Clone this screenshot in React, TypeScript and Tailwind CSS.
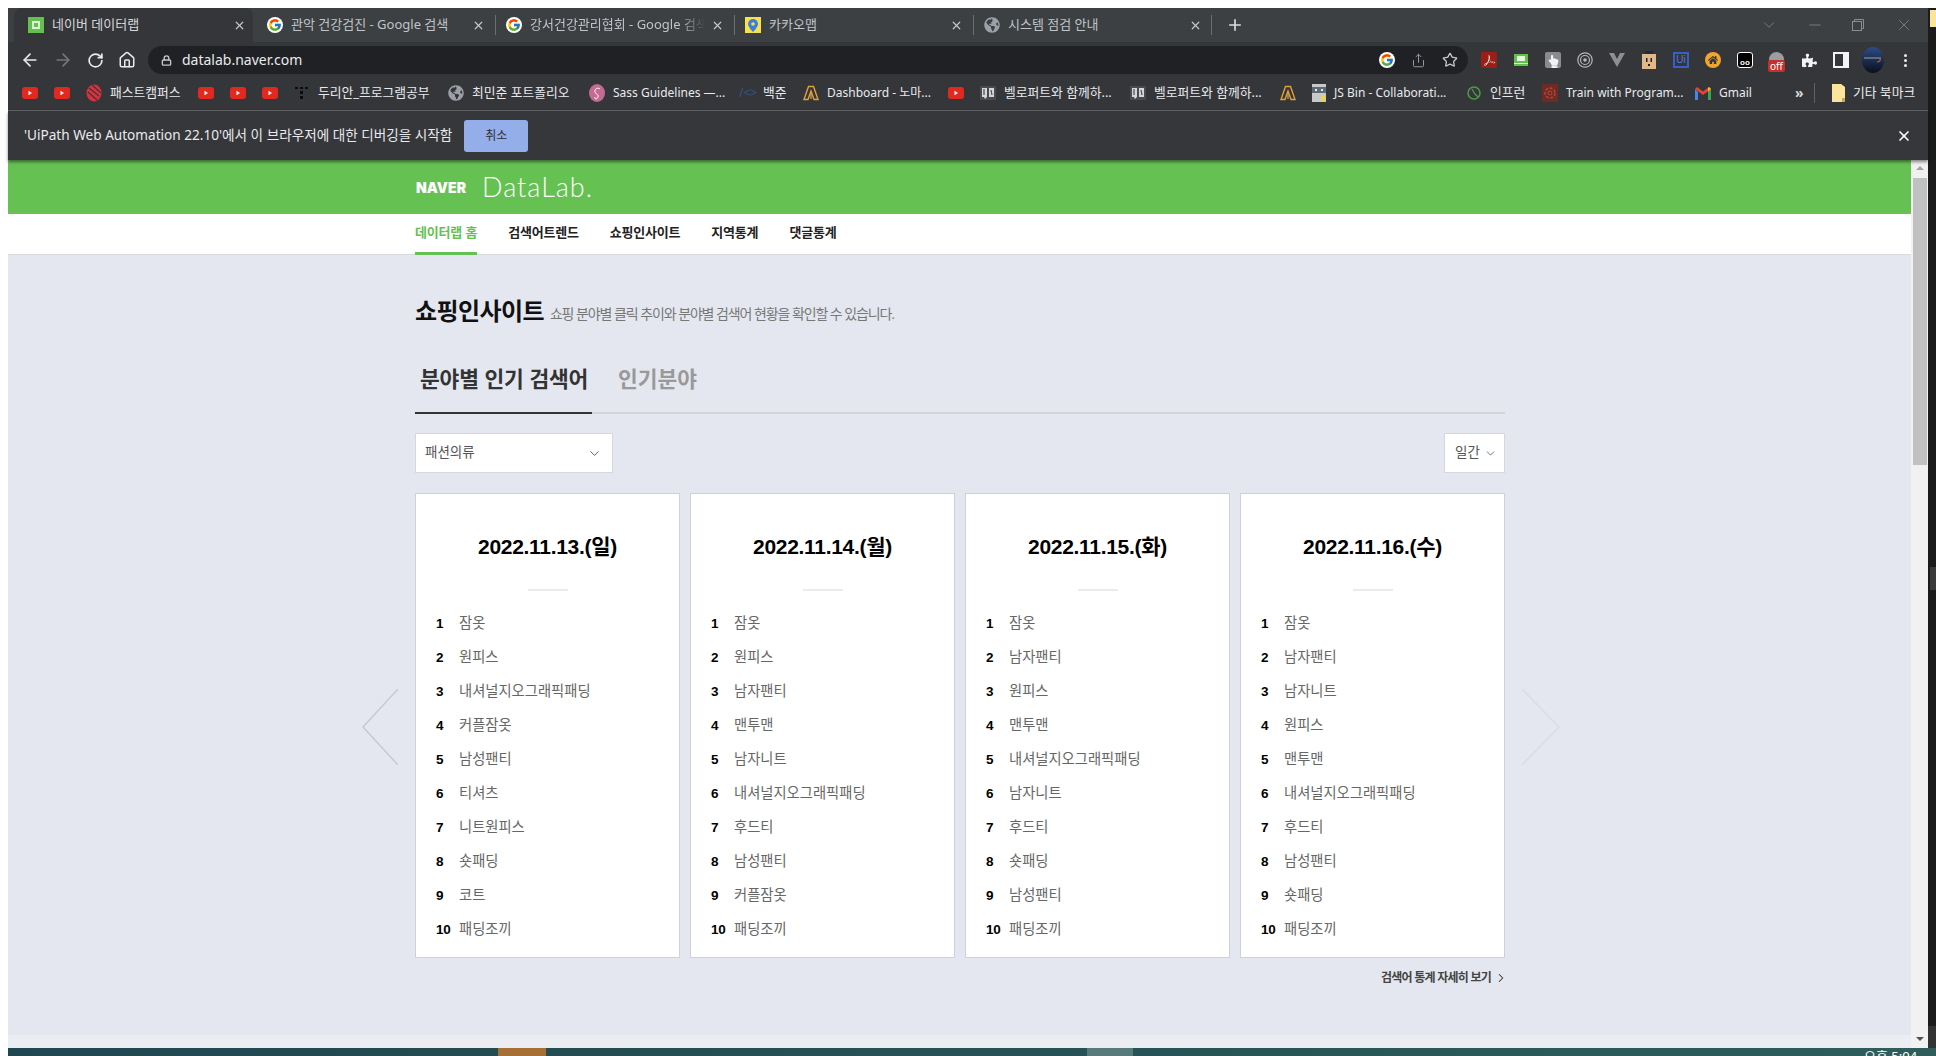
import { ArrowLeft, ArrowRight, RotateCw, Home, Lock, Star, Share, X, Plus, ChevronDown, ChevronRight, Minus } from "lucide-react";
import { FaGlobeAmericas, FaHandPointUp, FaHome, FaPuzzlePiece } from "react-icons/fa";
import { FcGoogle } from "react-icons/fc";
import { SiAdobeacrobatreader } from "react-icons/si";
import type { ReactNode } from "react";

const uiFont = "font-['Noto_Sans','Noto_Sans_CJK_KR',sans-serif]";
const pageFont = "font-['Liberation_Sans','Noto_Sans_CJK_KR',sans-serif]";

const YouTube = () => (
  <svg width="16" height="12" viewBox="0 0 16 12" className="shrink-0">
    <rect width="16" height="12" rx="3" fill="#e1291f" />
    <path d="M6.5 3.8v4.4L10 6z" fill="#fff" />
  </svg>
);

const Book = () => (
  <svg width="16" height="16" viewBox="0 0 16 16" className="shrink-0">
    <rect width="16" height="14" y="1" fill="#4a4b4e" />
    <path d="M2 3h5v9l-2 2-1-2H2zM9 3h5v9H9z" fill="#d5d6d8" />
    <path d="M4 4v6M11 5l1 5" stroke="#4a4b4e" strokeWidth="1.2" />
  </svg>
);

const Nomad = () => (
  <svg width="16" height="16" viewBox="0 0 16 16" className="shrink-0">
    <path d="M5.5 1.5h5l4.5 13h-4L8 6l-3 8.5H1z" fill="none" stroke="#e0a13c" strokeWidth="1.4" />
    <path d="M8 6v8" stroke="#e0a13c" strokeWidth="1.2" />
  </svg>
);

const Globe = ({ size = 16 }: { size?: number }) => <FaGlobeAmericas size={size} className="shrink-0 text-[#9aa0a6]" />;

const FastCampus = () => (
  <svg width="16" height="18" viewBox="0 0 16 18" className="shrink-0">
    <ellipse cx="8" cy="9" rx="7.5" ry="8.5" fill="#d9313d" />
    <path d="M3 4l10 8M2 8l9 8M6 1l9 8" stroke="#35363a" strokeWidth="1.1" />
  </svg>
);

const Dots = () => (
  <svg width="16" height="16" viewBox="0 0 16 16" className="shrink-0">
    <g fill="#0b0b0b">
      <rect x="1" y="2" width="3" height="2" />
      <rect x="6" y="2" width="3" height="2" />
      <rect x="11" y="2" width="3" height="2" />
      <rect x="6" y="6" width="3" height="3" />
      <rect x="6" y="11" width="3" height="3" />
    </g>
  </svg>
);

const Sass = () => (
  <svg width="16" height="18" viewBox="0 0 16 18" className="shrink-0">
    <ellipse cx="8" cy="9" rx="8" ry="9" fill="#c56a93" />
    <path d="M11 5c-2-2-6 0-5 3s4 2 3 5-4 2-3 0" fill="none" stroke="#fff" strokeWidth="1" />
  </svg>
);

const Baekjoon = () => <span className="w-[16px] shrink-0 text-[12px] leading-none text-[#33568a]">/&lt;&gt;</span>;

const JsBin = () => (
  <svg width="14" height="18" viewBox="0 0 14 18" className="shrink-0">
    <rect width="14" height="18" fill="#c7c9cc" />
    <rect y="3" width="14" height="6" fill="#5d6a75" />
    <rect x="3" y="5" width="2" height="2" fill="#e8eaed" />
    <rect x="9" y="5" width="2" height="2" fill="#e8eaed" />
    <rect x="9" y="12" width="4" height="5" fill="#ecd34d" />
  </svg>
);

const Inflearn = () => (
  <svg width="16" height="16" viewBox="0 0 16 16" className="shrink-0">
    <circle cx="8" cy="8" r="6" fill="none" stroke="#4e9a4a" strokeWidth="1.5" />
    <path d="M6 4l3 5 3 3" fill="none" stroke="#4e9a4a" strokeWidth="1.3" />
  </svg>
);

const TrainIcon = () => (
  <svg width="16" height="18" viewBox="0 0 16 18" className="shrink-0">
    <rect width="16" height="18" fill="#6f2a24" />
    <circle cx="8" cy="9" r="5" fill="none" stroke="#b4483c" strokeWidth="1.5" strokeDasharray="3 1.5" />
    <circle cx="8" cy="9" r="2" fill="none" stroke="#b4483c" />
  </svg>
);

const GmailIcon = () => (
  <svg width="16" height="13" viewBox="0 0 16 13" className="shrink-0">
    <path d="M0 2v11h3V5z" fill="#4285f4" />
    <path d="M16 2v11h-3V5z" fill="#34a853" />
    <path d="M0 2l8 6 8-6-2-2-6 4.5L2 0z" fill="#ea4335" />
    <path d="M13 5l3-3-2-2-1 .8z" fill="#fbbc04" />
  </svg>
);

const Folder = () => (
  <svg width="13" height="18" viewBox="0 0 13 18" className="shrink-0">
    <path d="M0 0h9l4 3v15H0z" fill="#fde49b" />
    <path d="M10 14h3v4h-3z" fill="#c9a94f" />
  </svg>
);

type Mark = { icon: ReactNode; label?: string; cls: string };

// cls sets how wide each bookmark is, so the next one lands where chrome put it
const BOOKMARKS: Mark[] = [
  { icon: <YouTube />, cls: "w-[32px]" },
  { icon: <YouTube />, cls: "w-[32px]" },
  { icon: <FastCampus />, label: "패스트캠퍼스", cls: "w-[112px]" },
  { icon: <YouTube />, cls: "w-[32px]" },
  { icon: <YouTube />, cls: "w-[32px]" },
  { icon: <YouTube />, cls: "w-[32px]" },
  { icon: <Dots />, label: "두리안_프로그램공부", cls: "w-[154px]" },
  { icon: <Globe />, label: "최민준 포트폴리오", cls: "w-[141px]" },
  { icon: <Sass />, label: "Sass Guidelines —...", cls: "w-[150px]" },
  { icon: <Baekjoon />, label: "백준", cls: "w-[64px]" },
  { icon: <Nomad />, label: "Dashboard - 노마...", cls: "w-[145px]" },
  { icon: <YouTube />, cls: "w-[32px]" },
  { icon: <Book />, label: "벨로퍼트와 함께하...", cls: "w-[150px]" },
  { icon: <Book />, label: "벨로퍼트와 함께하...", cls: "w-[150px]" },
  { icon: <Nomad />, cls: "w-[32px]" },
  { icon: <JsBin />, label: "JS Bin - Collaborati...", cls: "w-[154px]" },
  { icon: <Inflearn />, label: "인프런", cls: "w-[76px]" },
  { icon: <TrainIcon />, label: "Train with Program...", cls: "w-[153px]" },
  { icon: <GmailIcon />, label: "Gmail", cls: "w-[90px]" },
];

const NaverFav = () => (
  <span className="flex h-[16px] w-[16px] shrink-0 items-center justify-center bg-[#64c14f]">
    <span className="h-[8px] w-[8px] border-2 border-[#dff3d8]" />
  </span>
);

const GoogleFav = () => (
  <span className="flex h-[16px] w-[16px] shrink-0 items-center justify-center rounded-full bg-white">
    <FcGoogle size={14} />
  </span>
);

const KakaoFav = () => (
  <span className="flex h-[16px] w-[16px] shrink-0 items-center justify-center bg-[#f7e14d]">
    <svg width="10" height="13" viewBox="0 0 10 13">
      <path d="M5 0a5 5 0 0 0-5 5c0 3 5 8 5 8s5-5 5-8a5 5 0 0 0-5-5z" fill="#3c7ee0" />
      <circle cx="5" cy="5" r="1.8" fill="#f7e14d" />
    </svg>
  </span>
);

const TABS = [
  { fav: <NaverFav />, title: "네이버 데이터랩", active: true, sep: false, fade: false },
  { fav: <GoogleFav />, title: "관악 건강검진 - Google 검색", active: false, sep: false, fade: false },
  { fav: <GoogleFav />, title: "강서건강관리협회 - Google 검색", active: false, sep: true, fade: true },
  { fav: <KakaoFav />, title: "카카오맵", active: false, sep: true, fade: false },
  { fav: <Globe />, title: "시스템 점검 안내", active: false, sep: true, fade: false },
];

const Sidebar = () => (
  <svg width="16" height="16" viewBox="0 0 16 16">
    <rect width="16" height="16" fill="#f1f3f4" />
    <rect x="2" y="2" width="8" height="12" fill="#35363a" />
  </svg>
);

const EXTENSIONS: ReactNode[] = [
  <span className="flex h-[16px] w-[16px] items-center justify-center rounded-[2px] bg-[#9b1f16] text-white"><SiAdobeacrobatreader size={11} /></span>,
  <svg width="14" height="12" viewBox="0 0 14 12"><rect width="14" height="12" fill="#5fc14a" /><rect x="3" y="2" width="8" height="5" fill="#e8f6e2" /><rect y="9" width="14" height="1" fill="#e8f6e2" /></svg>,
  <span className="flex h-[16px] w-[16px] items-end justify-center rounded-[2px] bg-[#8a8b8d] text-[#f1f1f1]"><FaHandPointUp size={13} /></span>,
  <svg width="16" height="16" viewBox="0 0 16 16" fill="none" stroke="#b5b7ba"><circle cx="8" cy="8" r="7.2" strokeWidth="1.2" /><circle cx="8" cy="8" r="4.5" strokeWidth="1.2" /><circle cx="8" cy="8" r="1.8" fill="#b5b7ba" stroke="none" /></svg>,
  <svg width="16" height="14" viewBox="0 0 16 14"><path d="M0 0h5l3 6 3-6h5L8 14z" fill="#8d8f92" /></svg>,
  <svg width="14" height="18" viewBox="0 0 14 18"><rect y="3" width="14" height="15" fill="#e0b88a" /><rect x="3" y="0" width="8" height="3" fill="#1f2a44" /><rect x="4" y="7" width="1.5" height="4" fill="#222" /><rect x="8.5" y="7" width="1.5" height="4" fill="#222" /><rect x="6" y="13" width="2" height="2" fill="#222" /></svg>,
  <span className="flex h-[16px] w-[16px] items-center justify-center border-2 border-[#3560c8] font-['Liberation_Sans',sans-serif] text-[10px] leading-none text-[#4f7be0]">Ui</span>,
  <span className="flex h-[16px] w-[16px] items-center justify-center rounded-full bg-[#f0a52b] text-[#35363a]"><FaHome size={10} /></span>,
  <span className="flex h-[16px] w-[16px] items-end justify-center rounded-[3px] border border-white bg-black font-['Liberation_Sans',sans-serif] text-[8px] font-bold leading-[9px] text-white">oo</span>,
  <span className="relative flex h-[16px] w-[16px]">
    <span className="h-[15px] w-[15px] rounded-full bg-[#9b9da0]" />
    <span className="absolute left-[-1px] top-[8px] rounded-[2px] bg-[#c5302c] px-[2px] font-['Noto_Sans',sans-serif] text-[10px] leading-[12px] text-white">off</span>
  </span>,
  <FaPuzzlePiece size={15} className="text-[#f1f3f4]" />,
  <Sidebar />,
  <svg width="22" height="26" viewBox="0 0 22 26"><defs><linearGradient id="ava" x1="0" y1="0" x2="0" y2="1"><stop offset="0" stopColor="#2c4c86" /><stop offset="1" stopColor="#0a0f1c" /></linearGradient></defs><ellipse cx="11" cy="13" rx="11" ry="13" fill="url(#ava)" /><path d="M2 11h17" stroke="#a8a296" strokeWidth="1" /><path d="M18 11c1 3-1 4-3 4" stroke="#b5652c" strokeWidth="1.2" fill="none" /></svg>,
];

const DATES = [
  { date: "2022.11.13.(일)", items: ["잠옷", "원피스", "내셔널지오그래픽패딩", "커플잠옷", "남성팬티", "티셔츠", "니트원피스", "숏패딩", "코트", "패딩조끼"] },
  { date: "2022.11.14.(월)", items: ["잠옷", "원피스", "남자팬티", "맨투맨", "남자니트", "내셔널지오그래픽패딩", "후드티", "남성팬티", "커플잠옷", "패딩조끼"] },
  { date: "2022.11.15.(화)", items: ["잠옷", "남자팬티", "원피스", "맨투맨", "내셔널지오그래픽패딩", "남자니트", "후드티", "숏패딩", "남성팬티", "패딩조끼"] },
  { date: "2022.11.16.(수)", items: ["잠옷", "남자팬티", "남자니트", "원피스", "맨투맨", "내셔널지오그래픽패딩", "후드티", "남성팬티", "숏패딩", "패딩조끼"] },
];

const NAV = ["데이터랩 홈", "검색어트렌드", "쇼핑인사이트", "지역통계", "댓글통계"];

function RankCard({ date, items }: { date: string; items: string[] }) {
  return (
    <div className="h-[465px] w-[265px] border border-[#cdd1db] bg-white">
      <h3 className="pt-[39px] text-center text-[21px] font-bold leading-[28px] tracking-[-0.3px] text-black">{date}</h3>
      <div className="mx-auto mt-[28px] h-[2px] w-[40px] bg-[#e9ebef]" />
      <ol className="mt-[16px] pl-[20px]">
        {items.map((k, i) => (
          <li key={i} className="flex h-[34px] items-center">
            <span className="w-[23px] text-[13.5px] font-bold tracking-[-0.3px] text-black">{i + 1}</span>
            <span className="text-[14.3px] text-[#666]">{k}</span>
          </li>
        ))}
      </ol>
    </div>
  );
}

export default function App() {
  return (
    <div className="flex h-[1056px] w-[1936px] flex-col overflow-hidden bg-white pl-[8px] pt-[8px]">
      <div className="flex h-[1040px] min-h-0">
        <div className={`flex w-[1920px] flex-col ${uiFont}`}>
          {/* tab strip */}
          <div className="flex h-[34px] shrink-0 items-center bg-[#3c4043] pl-[6px] pr-[10px]">
            {TABS.map((t, i) => (
              <div
                key={i}
                className={`flex h-[34px] w-[239px] shrink-0 items-center pl-[3px] ${t.active ? "rounded-t-[8px] bg-[#35363a]" : ""}`}
              >
                <div className={`h-[20px] w-px shrink-0 ${t.sep ? "bg-[#6b6e72]" : "bg-transparent"}`} />
                <div className="ml-[10px]">{t.fav}</div>
                <span
                  className={`ml-[8px] min-w-0 flex-1 overflow-hidden whitespace-nowrap pb-[1px] text-[13px] ${t.active ? "text-[#d5d8dc]" : "text-[#c0c3c7]"} ${t.fade ? "[mask-image:linear-gradient(to_right,black_85%,transparent)]" : ""}`}
                >
                  {t.title}
                </span>
                <X size={13} strokeWidth={2.2} className="ml-[6px] mr-[7px] shrink-0 text-[#c4c7c5]" />
              </div>
            ))}
            <div className="ml-[2px] h-[20px] w-px bg-[#6b6e72]" />
            <Plus size={18} strokeWidth={2.2} className="ml-[14px] text-[#dadce0]" />
            <div className="flex-1" />
            <ChevronDown size={18} strokeWidth={1} className="mr-[28px] text-[#8a8d91]" />
            <Minus size={18} strokeWidth={1} className="mr-[28px] text-[#8a8d91]" />
            <svg width="12" height="12" viewBox="0 0 12 12" className="mr-[31px]" fill="none" stroke="#8a8d91">
              <rect x="0.5" y="2.5" width="9" height="9" />
              <path d="M2.5 2.5v-2h9v9h-2" />
            </svg>
            <X size={18} strokeWidth={1} className="mr-[5px] text-[#8a8d91]" />
          </div>

          {/* toolbar */}
          <div className="flex h-[36px] shrink-0 items-center bg-[#35363a] pl-[12px]">
            <ArrowLeft size={20} strokeWidth={2} className="text-[#e8eaed]" />
            <ArrowRight size={20} strokeWidth={2} className="ml-[13px] text-[#74777b]" />
            <RotateCw size={17} strokeWidth={2.4} className="ml-[14px] text-[#e8eaed]" />
            <Home size={18} strokeWidth={2} className="ml-[14px] text-[#e8eaed]" />
            <div className="ml-[12px] flex h-[28px] w-[1320px] shrink-0 items-center rounded-full bg-[#202124] pl-[13px] pr-[10px]">
              <Lock size={11} strokeWidth={3} className="text-[#c4c7c5]" />
              <span className="ml-[10px] text-[14px] leading-none text-[#e8eaed]">datalab.naver.com</span>
              <div className="flex-1" />
              <GoogleFav />
              <Share size={15} strokeWidth={1.5} className="ml-[16px] text-[#9aa0a6]" />
              <Star size={16} strokeWidth={2} className="ml-[16px] text-[#c4c7c5]" />
            </div>
            <div className="ml-[5px] flex items-center">
              {EXTENSIONS.map((e, i) => (
                <div key={i} className="flex h-[28px] w-[32px] shrink-0 items-center justify-center">{e}</div>
              ))}
              <div className="flex w-[32px] flex-col items-center gap-[2px]">
                <span className="h-[3px] w-[3px] rounded-full bg-[#e8eaed]" />
                <span className="h-[3px] w-[3px] rounded-full bg-[#e8eaed]" />
                <span className="h-[3px] w-[3px] rounded-full bg-[#e8eaed]" />
              </div>
            </div>
          </div>

          {/* bookmarks */}
          <div className="flex h-[33px] shrink-0 items-center border-b border-[#5f6164] bg-[#35363a] pb-[2px] pl-[14px]">
            {BOOKMARKS.map((b, i) => (
              <div key={i} className={`flex shrink-0 items-center gap-[8px] ${b.cls}`}>
                {b.icon}
                {b.label && (
                  <span className={`whitespace-nowrap text-[#e8eaed] ${/^[가-힣]/.test(b.label) ? "text-[12.8px]" : "text-[12px]"}`}>{b.label}</span>
                )}
              </div>
            ))}
            <span className="ml-[10px] w-[14px] text-[14px] font-bold leading-none text-[#d5d7da]">»</span>
            <div className="mx-[5px] h-[20px] w-px bg-[#5f6164]" />
            <div className="ml-[12px] flex items-center gap-[8px]">
              <Folder />
              <span className="whitespace-nowrap text-[12.8px] text-[#e8eaed]">기타 북마크</span>
            </div>
          </div>

          {/* debugger infobar */}
          <div className="relative z-10 flex h-[49px] shrink-0 items-center bg-[#36373b] pl-[16px] pr-[16px] shadow-[0_2px_3px_rgba(0,0,0,0.45)]">
            <span className="text-[13.6px] text-[#e8eaed]">'UiPath Web Automation 22.10'에서 이 브라우저에 대한 디버깅을 시작함</span>
            <button className="ml-[12px] h-[32px] w-[64px] rounded-[3px] bg-[#94aeea] text-[12px] text-[#2b2f38]">취소</button>
            <div className="flex-1" />
            <X size={16} strokeWidth={2.6} className="text-white" />
          </div>

          {/* page + scrollbar */}
          <div className="flex min-h-0 flex-1">
            <div className={`flex w-[1903px] flex-col overflow-hidden bg-[#e4e7ef] ${pageFont}`}>
              <div className="h-[54px] shrink-0 bg-[#66c153] pl-[407px] pt-[17px]">
                <div className="flex h-[22px] items-center">
                  <span className="w-[67px] pl-[1px] font-['Inter',sans-serif] text-[14px] font-black leading-none tracking-[0.1px] text-white">NAVER</span>
                  <span className="pb-[3px] font-['Lato',sans-serif] text-[27px] font-light leading-none tracking-[1px] text-white">DataLab.</span>
                </div>
              </div>
              <div className="flex h-[41px] shrink-0 gap-[31px] border-b border-[#d8dae0] bg-white pl-[407px]">
                {NAV.map((n, i) => (
                  <a
                    key={n}
                    className={`flex h-[41px] items-center whitespace-nowrap text-[13px] font-bold tracking-[-0.2px] ${i === 0 ? "border-b-[3px] border-[#66c153] text-[#66c153]" : "pb-[3px] text-[#222]"}`}
                  >
                    {n}
                  </a>
                ))}
              </div>

              <div className="min-h-0 flex-1 pl-[407px]">
                <div className="relative w-[1090px]">
                  <div className="flex items-end pt-[43px]">
                    <h2 className="text-[24px] font-bold leading-[28px] tracking-[-0.6px] text-[#111]">쇼핑인사이트</h2>
                    <p className="mb-[1px] ml-[6px] text-[14px] tracking-[-1.15px] text-[#777]">쇼핑 분야별 클릭 추이와 분야별 검색어 현황을 확인할 수 있습니다.</p>
                  </div>

                  <div className="mt-[35px] flex h-[53px] border-b-2 border-[#d3d5da]">
                    <div className="-mb-[2px] h-[53px] w-[177px] border-b-2 border-[#333] pl-[5px] pt-[4px] text-[21.5px] font-bold leading-[30px] tracking-[-0.2px] text-[#333]">분야별 인기 검색어</div>
                    <div className="ml-[26px] pt-[4px] text-[21.5px] font-bold leading-[30px] text-[#999]">인기분야</div>
                  </div>

                  <div className="mt-[19px] flex justify-between">
                    <div className="flex h-[40px] w-[198px] items-center justify-between border border-[#d5d7dc] bg-white pl-[9px] pr-[10px] text-[13.5px] text-[#555]">
                      패션의류
                      <ChevronDown size={15} strokeWidth={1.5} className="text-[#555]" />
                    </div>
                    <div className="flex h-[40px] w-[61px] items-center gap-[4px] border border-[#d5d7dc] bg-white pl-[10px] text-[13.5px] text-[#555]">
                      일간
                      <ChevronDown size={13} strokeWidth={1.5} className="text-[#555]" />
                    </div>
                  </div>

                  <div className="relative mt-[20px] flex gap-[10px]">
                    {DATES.map(d => <RankCard key={d.date} date={d.date} items={d.items} />)}
                    <svg width="36" height="76" viewBox="0 0 36 76" className="absolute left-[-53px] top-[196px]" fill="none" stroke="#c6cad0" strokeWidth="1.5">
                      <path d="M36 0L1 38l35 38" />
                    </svg>
                    <svg width="38" height="76" viewBox="0 0 38 76" className="absolute right-[-55px] top-[196px]" fill="none" stroke="#d9dce4" strokeWidth="1.5">
                      <path d="M0 0l37 38L0 76" />
                    </svg>
                  </div>

                  <div className="mt-[10px] flex h-[20px] items-center justify-end text-[12px] font-bold tracking-[-0.8px] text-[#444]">
                    검색어 통계 자세히 보기
                    <ChevronRight size={14} strokeWidth={1.8} className="ml-[3px] mr-[-3px] text-[#333]" />
                  </div>
                </div>
              </div>
              <div className="h-[13px] shrink-0 bg-[#ecedf2]" />
            </div>

            {/* scrollbar */}
            <div className="flex w-[17px] shrink-0 flex-col items-center bg-[#f1f1f1]">
              <div className="mt-[6px] h-0 w-0 border-x-[4px] border-b-[4px] border-x-transparent border-b-[#a3a3a3]" />
              <div className="mt-[8px] h-[287px] w-[14px] bg-[#c1c1c1]" />
              <div className="flex-1" />
              <div className="mb-[7px] h-0 w-0 border-x-[4px] border-t-[4px] border-x-transparent border-t-[#505050]" />
            </div>
          </div>
        </div>

        {/* sliver of the next window */}
        <div className="flex w-[8px] shrink-0 flex-col bg-[#1b1b1b]">
          <div className="ml-[2px] mt-[2px] h-[17px] bg-[#fde49b]" />
          <div className="ml-[2px] mt-[540px] h-[23px] bg-[#3a3a3a]" />
          <div className="flex-1" />
          <div className="h-[22px] bg-[#333]" />
        </div>
      </div>

      {/* taskbar */}
      <div className="flex h-[8px] shrink-0 overflow-hidden bg-gradient-to-r from-[#20464f] to-[#2e5d5b] pl-[490px]">
        <div className="h-[8px] w-[48px] bg-[#a66f35]" />
        <div className="ml-[541px] h-[8px] w-[46px] bg-[#587a7a]" />
        <span className={`ml-[731px] whitespace-nowrap text-[13px] leading-[16px] text-white ${uiFont}`}>오후 5:04</span>
      </div>
    </div>
  );
}
